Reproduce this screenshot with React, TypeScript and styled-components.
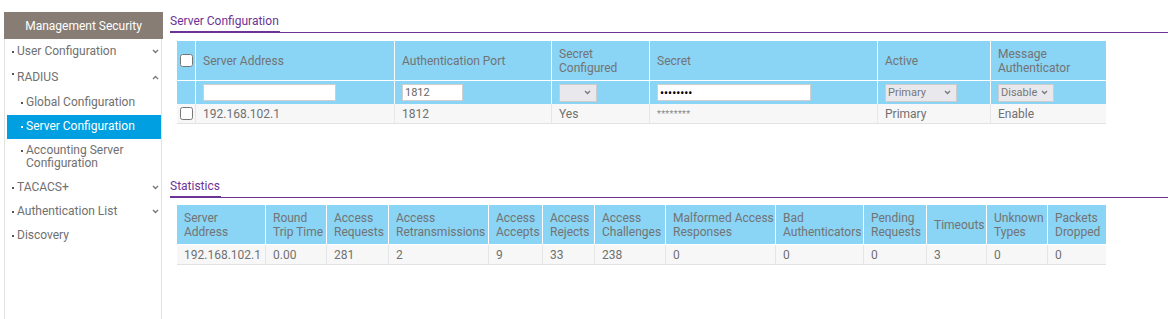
import styled, { createGlobalStyle } from 'styled-components'

const GlobalStyle = createGlobalStyle`
  html, body {
    margin: 0;
    padding: 0;
    background: #ffffff;
    font-family: Roboto, "Liberation Sans", Arial, sans-serif;
    font-size: 12px;
    color: #707070;
  }
  * { box-sizing: border-box; }
`

const menu = [
  { label: 'User Configuration', arrow: 'down' },
  {
    label: 'RADIUS',
    arrow: 'up',
    children: [
      { label: 'Global Configuration' },
      { label: 'Server Configuration', active: true },
      { label: 'Accounting Server Configuration' },
    ],
  },
  { label: 'TACACS+', arrow: 'down' },
  { label: 'Authentication List', arrow: 'down' },
  { label: 'Discovery' },
]

const configCols = [19, 199, 157, 98, 228, 113, 115]
const statCols = [89, 61, 62, 100, 54, 52, 71, 110, 88, 63, 60, 61, 58]

const statHeads = [
  ['Server', 'Address'],
  ['Round', 'Trip Time'],
  ['Access', 'Requests'],
  ['Access', 'Retransmissions'],
  ['Access', 'Accepts'],
  ['Access', 'Rejects'],
  ['Access', 'Challenges'],
  ['Malformed Access', 'Responses'],
  ['Bad', 'Authenticators'],
  ['Pending', 'Requests'],
  ['Timeouts'],
  ['Unknown', 'Types'],
  ['Packets', 'Dropped'],
]

const statValues = ['192.168.102.1', '0.00', '281', '2', '9', '33', '238', '0', '0', '0', '3', '0', '0']

function Chevron({ dir }: { dir: string }) {
  return (
    <svg width="7" height="5" viewBox="0 0 7 5">
      <polyline
        points={dir === 'up' ? '1,4 3.5,1.5 6,4' : '1,1 3.5,3.5 6,1'}
        fill="none"
        stroke="#777"
        strokeWidth="1.3"
      />
    </svg>
  )
}

function Dropdown({ value, options, width }: { value: string; options: string[]; width: number }) {
  return (
    <SelectWrap style={{ width }}>
      <Select defaultValue={value}>
        {options.map((o) => (
          <option key={o} value={o}>
            {o}
          </option>
        ))}
      </Select>
      <SelectArrow>
        <Chevron dir="down" />
      </SelectArrow>
    </SelectWrap>
  )
}

export default function App() {
  return (
    <Page>
      <GlobalStyle />
      <Sidebar>
        <SideHeader>Management Security</SideHeader>
        <SideBody>
          {menu.map((item) => (
            <div key={item.label}>
              <MenuItem $open={!!item.children}>
                <Bullet $offset={item.children ? -3 : 1} />
                <MenuLabel>{item.label}</MenuLabel>
                {item.arrow && (
                  <ArrowBox>
                    <Chevron dir={item.arrow} />
                  </ArrowBox>
                )}
              </MenuItem>
              {item.children && (
                <SubList>
                  {item.children.map((c) => (
                    <SubItem key={c.label} $active={!!c.active}>
                      <Bullet $light={!!c.active} $offset={6} />
                      <MenuLabel>{c.label}</MenuLabel>
                    </SubItem>
                  ))}
                </SubList>
              )}
            </div>
          ))}
        </SideBody>
      </Sidebar>

      <Main>
        <Section>
          <SectionTitle>
            <span>Server Configuration</span>
          </SectionTitle>
          <Table $top={8}>
            <colgroup>
              {configCols.map((w, i) => (
                <col key={i} style={{ width: w }} />
              ))}
            </colgroup>
            <thead>
              <tr>
                <Th $check>
                  <Check type="checkbox" />
                </Th>
                <Th>Server Address</Th>
                <Th>Authentication Port</Th>
                <Th>
                  Secret
                  <br />
                  Configured
                </Th>
                <Th>Secret</Th>
                <Th>Active</Th>
                <Th>
                  Message
                  <br />
                  Authenticator
                </Th>
              </tr>
              <tr>
                <FilterCell />
                <FilterCell>
                  <TextInput style={{ width: 133 }} defaultValue="" />
                </FilterCell>
                <FilterCell>
                  <TextInput style={{ width: 61 }} defaultValue="1812" />
                </FilterCell>
                <FilterCell>
                  <Dropdown value="" options={['', 'Yes', 'No']} width={38} />
                </FilterCell>
                <FilterCell>
                  <TextInput $secret type="password" style={{ width: 154 }} defaultValue="12345678" />
                </FilterCell>
                <FilterCell>
                  <Dropdown value="Primary" options={['Primary', 'Secondary']} width={72} />
                </FilterCell>
                <FilterCell>
                  <Dropdown value="Disable" options={['Disable', 'Enable']} width={56} />
                </FilterCell>
              </tr>
            </thead>
            <tbody>
              <tr>
                <Td $check>
                  <Check type="checkbox" />
                </Td>
                <Td>192.168.102.1</Td>
                <Td>1812</Td>
                <Td>Yes</Td>
                <Td>
                  <Masked>********</Masked>
                </Td>
                <Td>Primary</Td>
                <Td>Enable</Td>
              </tr>
            </tbody>
          </Table>
        </Section>

        <Section $gap={53}>
          <SectionTitle>
            <span>Statistics</span>
          </SectionTitle>
          <Table $top={7}>
            <colgroup>
              {statCols.map((w, i) => (
                <col key={i} style={{ width: w }} />
              ))}
            </colgroup>
            <thead>
              <tr>
                {statHeads.map((h, i) => (
                  <Th key={i}>
                    {h[0]}
                    {h[1] && (
                      <>
                        <br />
                        {h[1]}
                      </>
                    )}
                  </Th>
                ))}
              </tr>
            </thead>
            <tbody>
              <tr>
                {statValues.map((v, i) => (
                  <Td key={i}>{v}</Td>
                ))}
              </tr>
            </tbody>
          </Table>
        </Section>
      </Main>
    </Page>
  )
}

const Page = styled.div`
  display: flex;
  align-items: stretch;
  gap: 7px;
  padding: 12px 0 0 4px;
  min-height: 319px;
`

const Sidebar = styled.aside`
  width: 159px;
  flex-shrink: 0;
  display: flex;
  flex-direction: column;
`

const SideHeader = styled.div`
  height: 27px;
  background: #877d74;
  color: #ffffff;
  display: flex;
  align-items: center;
  justify-content: center;
  font-size: 12px;
`

const SideBody = styled.nav`
  flex: 1;
  width: 158px;
  border-left: 1px solid #e2e2e2;
  border-right: 1px solid #e2e2e2;
  padding-left: 2px;
`

const MenuItem = styled.div<{ $open: boolean }>`
  display: flex;
  align-items: center;
  height: ${(p) => (p.$open ? '26px' : '24px')};
  padding-left: 5px;
  padding-right: 2px;
  padding-top: ${(p) => (p.$open ? '2px' : '0')};
  color: #707070;
`

const SubList = styled.div`
  padding-top: 2px;
`

const SubItem = styled.div<{ $active: boolean }>`
  display: flex;
  align-items: flex-start;
  padding: 5px 4px 6px 14px;
  line-height: 13px;
  background: ${(p) => (p.$active ? '#009fe1' : 'transparent')};
  color: ${(p) => (p.$active ? '#ffffff' : '#707070')};

  &:last-child {
    padding-top: 5px;
    padding-bottom: 5px;
  }
`

const Bullet = styled.span<{ $light?: boolean; $offset: number }>`
  width: 2px;
  height: 2px;
  flex-shrink: 0;
  margin-right: 3px;
  position: relative;
  top: ${(p) => p.$offset}px;
  align-self: ${(p) => (p.$offset > 3 ? 'flex-start' : 'center')};
  background: ${(p) => (p.$light ? '#ffffff' : '#555555')};
`

const MenuLabel = styled.span`
  flex: 1;
  line-height: 13px;
`

const ArrowBox = styled.span`
  display: flex;
  align-items: center;
`

const Main = styled.main`
  flex: 1;
  display: flex;
  flex-direction: column;
`

const Section = styled.section<{ $gap?: number }>`
  margin-top: ${(p) => p.$gap ?? 0}px;
`

const SectionTitle = styled.div`
  height: 21px;
  border-bottom: 1px solid #6c3397;
  display: flex;
  align-items: flex-end;

  span {
    color: #6c3397;
    font-size: 12px;
    line-height: 14px;
    padding: 0 1px 3px 0;
    margin-bottom: -1px;
    border-bottom: 2px solid #6c3397;
  }
`

const Table = styled.table<{ $top: number }>`
  margin: ${(p) => p.$top}px 0 0 7px;
  width: 929px;
  table-layout: fixed;
  border-collapse: separate;
  border-spacing: 0;
`

const Th = styled.th<{ $check?: boolean }>`
  background: #8ad4f5;
  color: #737373;
  font-weight: normal;
  text-align: left;
  height: 40px;
  padding: 0 ${(p) => (p.$check ? '0' : '7px')} 0 ${(p) => (p.$check ? '3px' : '7px')};
  line-height: 14px;
  vertical-align: middle;
  border-right: 1px solid #ffffff;
  border-bottom: 1px solid #ffffff;
  white-space: nowrap;
  overflow: hidden;

  &:last-child {
    border-right: none;
  }
`

const FilterCell = styled.td`
  background: #8ad4f5;
  height: 23px;
  padding: 0 7px;
  vertical-align: middle;
  border-right: 1px solid #ffffff;

  &:last-child {
    border-right: none;
  }
`

const Td = styled.td<{ $check?: boolean }>`
  background: #f7f7f7;
  height: 20px;
  padding: 0 ${(p) => (p.$check ? '0' : '7px')} 0 ${(p) => (p.$check ? '3px' : '7px')};
  color: #707070;
  line-height: 14px;
  vertical-align: middle;
  border-right: 1px solid #e6e6e6;
  border-bottom: 1px solid #e2e2e2;
  white-space: nowrap;

  &:last-child {
    border-right: none;
  }
`

const Check = styled.input`
  width: 13px;
  height: 13px;
  margin: 0;
  display: block;
`

const TextInput = styled.input<{ $secret?: boolean }>`
  height: 17px;
  display: block;
  border: 1px solid #cfcfcf;
  background: #ffffff;
  padding: 0 2px;
  font-family: Roboto, "Liberation Sans", Arial, sans-serif;
  font-size: ${(p) => (p.$secret ? '12px' : '11px')};
  color: ${(p) => (p.$secret ? '#000000' : '#666666')};
  outline: none;
`

const SelectWrap = styled.div`
  position: relative;
  height: 18px;
`

const Select = styled.select`
  appearance: none;
  width: 100%;
  height: 18px;
  display: block;
  margin: 0;
  border: 1px solid #cccccc;
  border-radius: 0;
  background: #e9e9ed;
  padding: 0 12px 0 2px;
  font-family: Roboto, "Liberation Sans", Arial, sans-serif;
  font-size: 11px;
  color: #777777;
  outline: none;
`

const SelectArrow = styled.span`
  position: absolute;
  right: 6px;
  top: 6px;
  display: flex;
  pointer-events: none;
`

const Masked = styled.span`
  font-size: 9px;
  letter-spacing: 0.3px;
  color: #888888;
`
